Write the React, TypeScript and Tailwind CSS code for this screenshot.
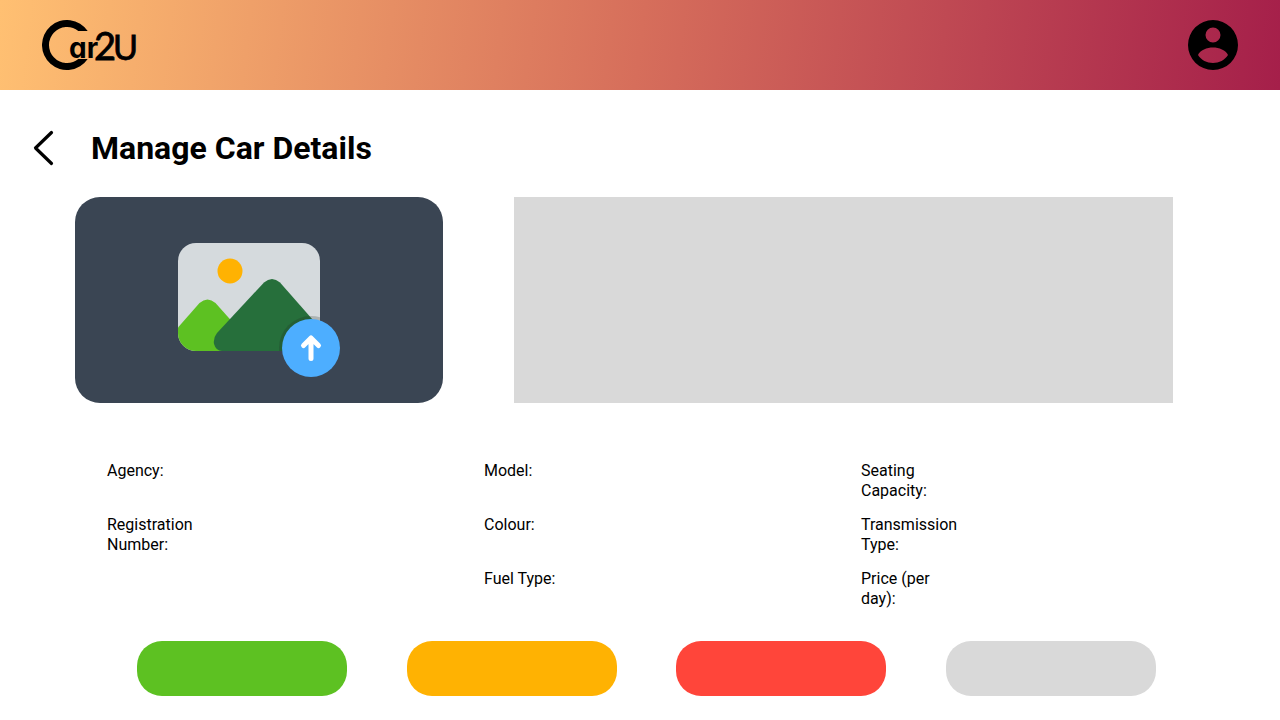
const fields = [
  { id: 'agency', label: 'Agency:', cell: 'col-start-1 row-start-1' },
  { id: 'registration', label: 'Registration Number:', cell: 'col-start-1 row-start-2' },
  { id: 'model', label: 'Model:', cell: 'col-start-2 row-start-1' },
  { id: 'colour', label: 'Colour:', cell: 'col-start-2 row-start-2' },
  { id: 'fuel', label: 'Fuel Type:', cell: 'col-start-2 row-start-3' },
  { id: 'seating', label: 'Seating Capacity:', cell: 'col-start-3 row-start-1' },
  { id: 'transmission', label: 'Transmission Type:', cell: 'col-start-3 row-start-2' },
  { id: 'price', label: 'Price (per day):', cell: 'col-start-3 row-start-3' },
];

const actions = [
  { name: 'Save', color: 'bg-[#5dc122]' },
  { name: 'Edit', color: 'bg-[#ffb202]' },
  { name: 'Delete', color: 'bg-[#ff453a]' },
  { name: 'Cancel', color: 'bg-[#d9d9d9]' },
];

function Logo() {
  return (
    <svg className="h-[50px] w-24" viewBox="0 0 96 50" role="img" aria-label="Car2U">
      <path d="M45.700 11A25 25 0 1 0 45.700 39H36.300A18 18 0 1 1 36.300 11Z" />
      <text x="27" y="38" fontSize="28" fontWeight="700" fontFamily="Inter, sans-serif" style={{ fontFeatureSettings: '"cv11"' }}>
        ar
      </text>
      <g fontFamily="Lato, sans-serif" stroke="black" strokeWidth="0.8">
        <text x="52" y="40" fontSize="38">2</text>
        <text x="71" y="40" fontSize="34">U</text>
      </g>
    </svg>
  );
}

function ProfileIcon() {
  return (
    <svg className="size-[50px]" viewBox="0 0 50 50" aria-hidden="true">
      <path
        fillRule="evenodd"
        d="M25 0a25 25 0 1 0 0 50a25 25 0 1 0 0-50ZM25 7.500a7.500 7.500 0 1 1 0 15a7.500 7.500 0 1 1 0-15ZM10 35C12 30 19 27.500 25 27.500S38 30 40 35C37 40 31 43 25 43S13 40 10 35Z"
      />
    </svg>
  );
}

function UploadIcon() {
  return (
    <svg className="h-[135px] w-[162px]" viewBox="0 0 162 135" aria-hidden="true">
      <defs>
        <clipPath id="photo">
          <rect width="142" height="108" rx="18" />
        </clipPath>
      </defs>
      <g clipPath="url(#photo)">
        <rect width="142" height="108" fill="#d5dadd" />
        <circle cx="52" cy="28" r="12.500" fill="#ffb202" />
        <path d="M-10 96L21.500 60Q29.500 53 37.500 60L75 102V110H-10Z" fill="#5dc122" />
        <path d="M44 108Q38 108 36 101Q35 95 39 90L86 39.500Q94 32.500 102 39.500L150 94V108Z" fill="#266f3b" />
        <circle cx="133" cy="105" r="32" fill="#1e2b20" fillOpacity="0.22" />
      </g>
      <circle cx="133" cy="105" r="29" fill="#4daeff" />
      <path d="M133 115.500V95M125.500 102.500L133 95L140.500 102.500" fill="none" stroke="white" strokeWidth="5" strokeLinecap="round" strokeLinejoin="round" />
    </svg>
  );
}

export default function App() {
  return (
    <div className="min-h-screen bg-white font-['Roboto',sans-serif] text-black">
      <header className="flex h-[90px] items-center justify-between bg-[linear-gradient(97deg,#ffc072,#d66e5b_50%,#a51f4a)] px-[42px]">
        <a href="#home">
          <Logo />
        </a>
        <button type="button" aria-label="Profile">
          <ProfileIcon />
        </button>
      </header>

      <main>
        <div className="flex items-center gap-9 px-8 pt-[38px]">
          <button type="button" aria-label="Back">
            <svg className="h-10 w-[23px]" viewBox="0 0 23 40" fill="none" stroke="black" strokeWidth="3.200" strokeLinecap="round" strokeLinejoin="round" aria-hidden="true">
              <path d="M19.500 4.500L3.500 20L19.500 35.500" />
            </svg>
          </button>
          <h1 className="text-[32px] leading-10 font-bold">Manage Car Details</h1>
        </div>

        <div className="flex gap-[71px] pt-[29px] pr-[107px] pl-[75px]">
          <button type="button" aria-label="Upload photo" className="flex h-[206px] w-[368px] shrink-0 items-center justify-center rounded-[25px] bg-[#3a4553] pt-[21px]">
            <UploadIcon />
          </button>
          <div className="flex-1 bg-[#d9d9d9]" />
        </div>

        <form>
          <div className="grid grid-cols-3 gap-y-[14px] pt-[58px] pr-[42px] pl-[107px]">
            {fields.map((f) => (
              <div key={f.id} className={`flex h-10 items-start ${f.cell}`}>
                <label htmlFor={f.id} className="w-[105px] shrink-0 text-base leading-5">
                  {f.label}
                </label>
                <input id={f.id} className="h-5 min-w-0 flex-1 bg-transparent outline-none" />
              </div>
            ))}
          </div>
          <div className="flex justify-between pt-8 pr-[124px] pb-6 pl-[137px]">
            {actions.map((a) => (
              <button key={a.name} type="button" aria-label={a.name} className={`h-[55px] w-[210px] rounded-[25px] ${a.color}`} />
            ))}
          </div>
        </form>
      </main>
    </div>
  );
}
